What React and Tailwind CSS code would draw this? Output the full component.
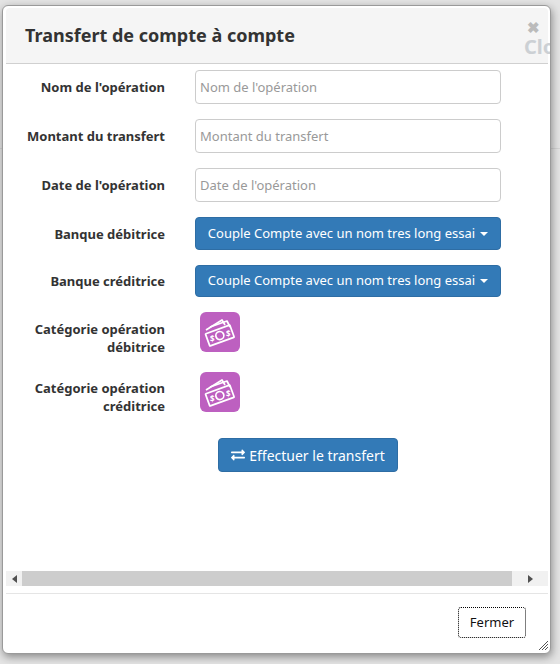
import { FaExchangeAlt } from 'react-icons/fa'

function MoneyIcon() {
  return (
    <svg width="32" height="32" viewBox="0 0 32 32" fill="none" stroke="white" strokeWidth="1.7" strokeLinejoin="round">
      <path d="M2 14 L18 4 L21 9" />
      <path d="M6 11 L23 5 L26 11" />
      <g transform="rotate(-20 16 20)">
        <rect x="3" y="13" width="26" height="13" rx="0.5" />
        <circle cx="16" cy="19.5" r="4" />
      </g>
      <text x="6" y="26" fontSize="8" fontWeight="700" fill="white" stroke="none" fontFamily="Open Sans, sans-serif">$</text>
      <text x="22" y="21" fontSize="8" fontWeight="700" fill="white" stroke="none" fontFamily="Open Sans, sans-serif">$</text>
    </svg>
  )
}

function Label({ children }) {
  return <label className="block w-[160px] shrink-0 text-right text-[13px] font-bold leading-[18px] text-[#333]">{children}</label>
}

function TextRow({ label, mb }) {
  return (
    <div className={`flex items-center ${mb}`}>
      <Label>{label}</Label>
      <input
        placeholder={label}
        className="ml-[30px] h-[34px] w-[306px] rounded border border-[#ccc] bg-white px-1 text-[13px] text-[#555] placeholder:text-[#999] outline-none"
      />
    </div>
  )
}

function BankRow({ label, mb, h }) {
  return (
    <div className={`flex items-center ${mb}`}>
      <Label>{label}</Label>
      <button className={`ml-[30px] flex w-[306px] items-center justify-center rounded border border-[#2e6da4] bg-[#337ab7] text-[13px] text-white ${h}`}>
        <span>Couple Compte avec un nom tres long essai</span>
        <span className="ml-[5px] h-0 w-0 border-x-[4px] border-t-[4px] border-x-transparent border-t-white" />
      </button>
    </div>
  )
}

function CategoryRow({ label, mb, pt }) {
  return (
    <div className={`flex h-[40px] items-start ${mb}`}>
      <div className={`w-[160px] shrink-0 ${pt}`}>
        <Label>{label}</Label>
      </div>
      <div className="ml-[35px] flex size-[40px] items-center justify-center rounded-md bg-[#bd60c0]">
        <MoneyIcon />
      </div>
    </div>
  )
}

export default function App() {
  return (
    <div className="relative h-[664px] w-[560px] overflow-hidden bg-[#e4e4e4] pl-[2px] pt-[5px] font-['Noto_Sans',sans-serif]">
      <div className="absolute left-0 right-0 top-[148px] h-px bg-[#d4d4d4]" />
      <div className="relative flex h-[649px] w-[549px] flex-col rounded-md border border-[#9a9a9a] bg-white p-[2px] shadow-[1px_3px_8px_rgba(0,0,0,0.4)]">
        <div className="ml-[1px] flex h-[56px] w-[542px] shrink-0 items-center rounded-t border-b border-[#d0d0d0] bg-[#f5f5f5] pb-[1px] pl-[19px]">
          <h4 className="text-[18px] font-bold text-[#333]">Transfert de compte à compte</h4>
        </div>

        <div className="absolute right-0 top-[12px] w-[26px] overflow-hidden">
          <div className="ml-[3px] text-[15px] font-bold leading-[18px] text-[#bbb]">✖</div>
          <div className="text-[20px] font-bold leading-[22px] whitespace-nowrap text-[#ccd0d4]">Close</div>
        </div>

        <div className="flex-1 pt-[6px]">
          <TextRow label="Nom de l'opération" mb="mb-[15px]" />
          <TextRow label="Montant du transfert" mb="mb-[15px]" />
          <TextRow label="Date de l'opération" mb="mb-[15px]" />
          <BankRow label="Banque débitrice" mb="mb-[15px]" h="h-[33px]" />
          <BankRow label="Banque créditrice" mb="mb-[15px]" h="h-[32px]" />
          <CategoryRow label={<>Catégorie opération<br />débitrice</>} mb="mb-[20px]" pt="pt-[8px]" />
          <CategoryRow label={<>Catégorie opération<br />créditrice</>} mb="mb-[26px]" pt="pt-[7px]" />
          <div className="ml-[213px]">
            <button className="flex h-[34px] w-[180px] items-center justify-center gap-[4px] rounded border border-[#2e6da4] bg-[#337ab7] text-[14px] text-white">
              <FaExchangeAlt size={14} />
              Effectuer le transfert
            </button>
          </div>
        </div>

        <div className="ml-[1px] flex h-[15px] w-[542px] shrink-0 items-center bg-[#f1f1f1]">
          <div className="flex h-full w-[16px] items-center justify-center">
            <span className="h-0 w-0 border-y-[4px] border-r-[5px] border-y-transparent border-r-[#505050]" />
          </div>
          <div className="h-full w-[490px] bg-[#cdcdcd]" />
          <div className="flex h-full flex-1 items-center justify-center">
            <span className="h-0 w-0 border-y-[4px] border-l-[5px] border-y-transparent border-l-[#505050]" />
          </div>
        </div>

        <div className="ml-[1px] mt-[7px] flex h-[58px] w-[542px] shrink-0 justify-end border-t border-[#e5e5e5] pr-[22px] pt-[13px]">
          <button className="h-[31px] w-[68px] rounded-[3px] border border-dotted border-black bg-white text-[13px] text-[#111]">
            Fermer
          </button>
        </div>

        <svg className="absolute bottom-[3px] right-[2px]" width="9" height="9" viewBox="0 0 9 9" stroke="#555" strokeWidth="1">
          <path d="M0 9 L9 0 M3 9 L9 3 M6 9 L9 6" />
        </svg>
      </div>
    </div>
  )
}
